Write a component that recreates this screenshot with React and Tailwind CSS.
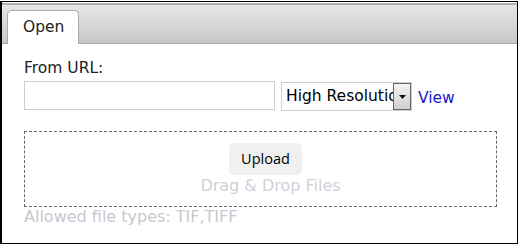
export default function App() {
  return (
    <div className="w-[520px] h-[245px] bg-white pt-px" style={{ fontFamily: '"DejaVu Sans", Verdana, sans-serif' }}>
      <div className="w-[518px] h-[243px] border border-l-2 border-black flex flex-col">
        <div className="mt-px h-[41px] border-t-2 border-[#b2b2b2] border-b border-b-[#a9a9a9] bg-gradient-to-b from-[#e6e6e6] to-[#c8c8c8] flex items-end pl-[5px]">
          <div className="w-[72px] h-[34px] -mb-px bg-white border border-b-0 border-[#a9a9a9] rounded-t-[5px] flex items-center pl-[15px] text-[15.5px] text-[#222]">
            Open
          </div>
        </div>
        <div className="pl-[22px] pt-[15px] text-[15.5px] text-[#222]">
          <div className="leading-[19px]">From URL:</div>
          <div className="flex items-center mt-[2px]">
            <input className="w-[251px] h-[29px] border border-[#cfcfcf] outline-none" />
            <div className="ml-[6px] mt-[2px] w-[131px] h-[29px] border border-[#cfcfcf] flex items-center relative overflow-hidden">
              <span className="pl-[4px] whitespace-nowrap text-[15.5px] text-black">High Resolution</span>
              <div className="absolute right-0 top-0 w-[18px] h-[27px] border border-[#666] bg-gradient-to-b from-[#f4f4f4] to-[#cfcfcf] flex items-center justify-center">
                <svg width="7" height="4" viewBox="0 0 7 4"><path d="M0 0h7L3.5 4z" fill="#111" /></svg>
              </div>
            </div>
            <a className="ml-[6px] mt-[6px] text-[#1a1acc] text-[15.5px]">View</a>
          </div>
          <div className="mt-[20px] w-[473px] h-[76px] border border-dashed border-[#666677] flex flex-col items-center pt-[11px]">
            <button className="ml-[10px] w-[73px] h-[32px] bg-[#f0f0f0] rounded-[5px] text-[14.5px] text-black" style={{ fontFamily: '"Open Sans", "Noto Sans", sans-serif' }}>
              Upload
            </button>
            <div className="ml-[20px] mt-[2px] text-[16px] text-[#d0d0d8] leading-[18px]">Drag &amp; Drop Files</div>
          </div>
          <div className="mt-[1px] text-[16px] text-[#c8c8d0] leading-[18px]">Allowed file types: TIF,TIFF</div>
        </div>
      </div>
    </div>
  );
}
